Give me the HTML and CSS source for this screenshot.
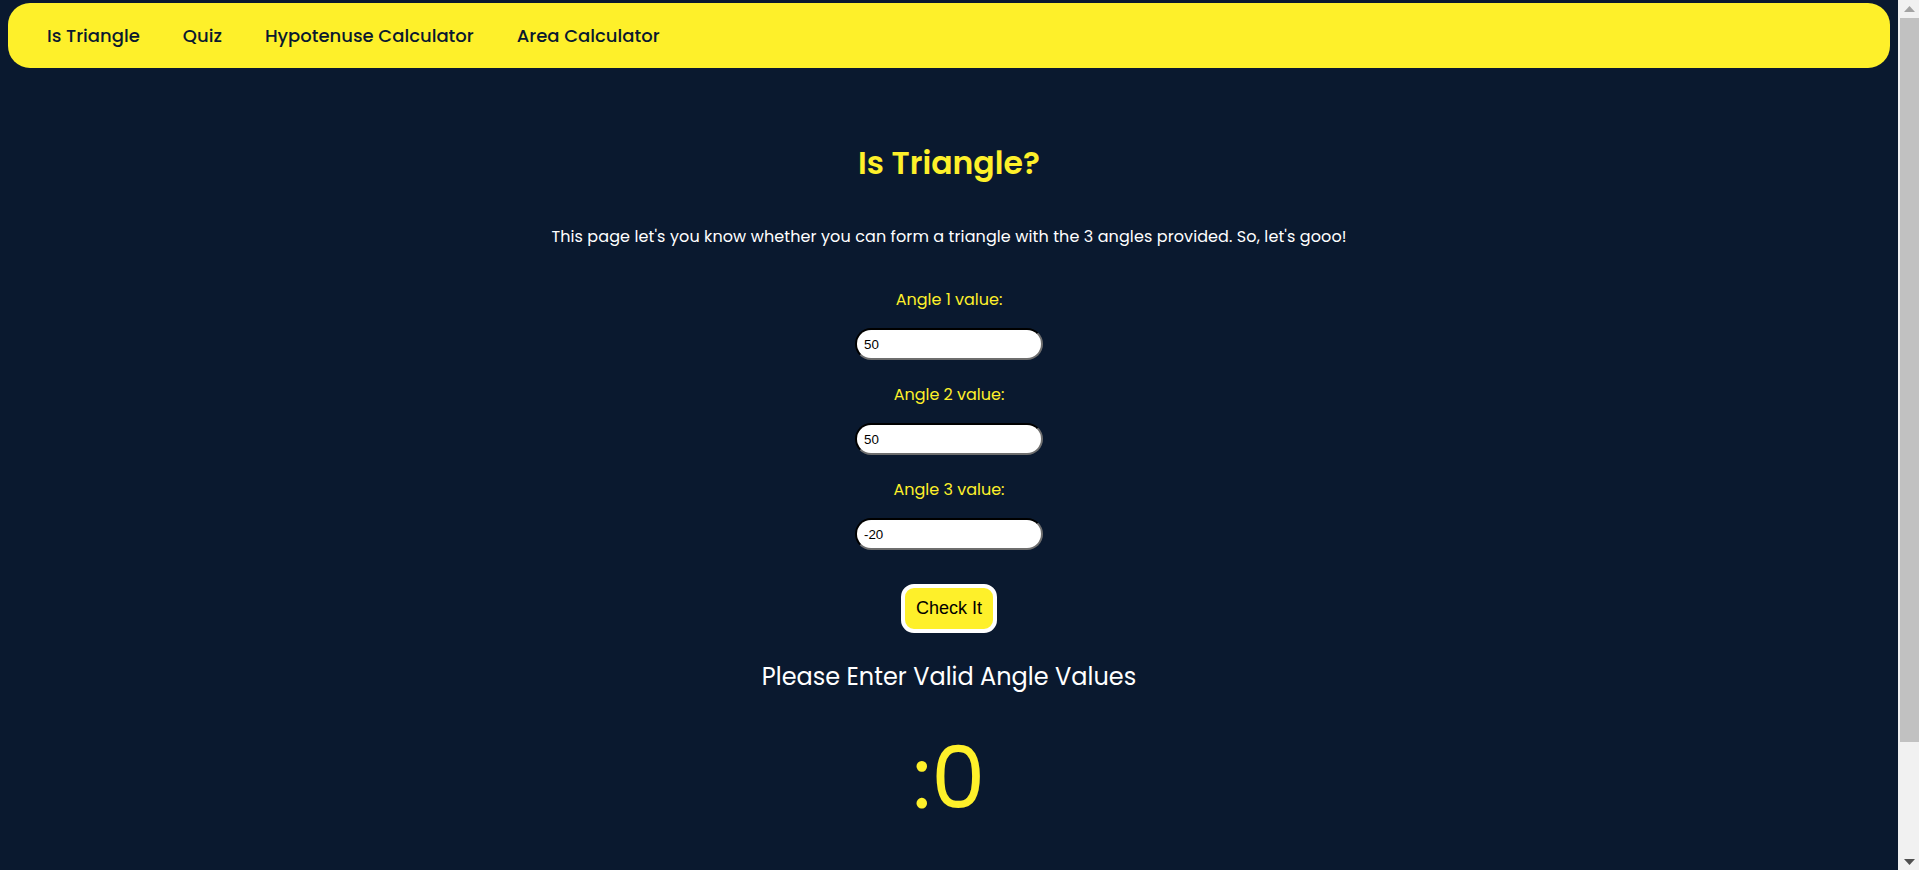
FILE: index.html
```html
<!DOCTYPE html>
<html lang="en">
<head>
<meta charset="utf-8">
<title>Is Triangle?</title>
<link rel="stylesheet" href="styles.css">
</head>
<body>
<div class="page">
  <nav class="navbar">
    <ul class="nav-list">
      <li><a class="nav-link" href="#">Is Triangle</a></li>
      <li><a class="nav-link" href="#">Quiz</a></li>
      <li><a class="nav-link" href="#">Hypotenuse Calculator</a></li>
      <li><a class="nav-link" href="#">Area Calculator</a></li>
    </ul>
  </nav>
  <main class="container">
    <h1 class="title">Is Triangle?</h1>
    <p class="intro">This page let's you know whether you can form a triangle with the 3 angles provided. So, let's gooo!</p>
    <div class="field">
      <label class="field-label" for="a1">Angle 1 value:</label>
      <input class="field-input" id="a1" type="number" value="50">
    </div>
    <div class="field">
      <label class="field-label" for="a2">Angle 2 value:</label>
      <input class="field-input" id="a2" type="number" value="50">
    </div>
    <div class="field">
      <label class="field-label" for="a3">Angle 3 value:</label>
      <input class="field-input" id="a3" type="number" value="-20">
    </div>
    <button class="check-btn" type="button">Check It</button>
    <p class="message">Please Enter Valid Angle Values</p>
    <div class="face">:0</div>
  </main>
</div>
<div class="scrollbar" aria-hidden="true">
  <div class="sb-button">
    <svg width="11" height="6" viewBox="0 0 11 6"><polygon points="0,6 11,6 5.5,0" fill="#a3a3a3"/></svg>
  </div>
  <div class="sb-track"><div class="sb-thumb"></div></div>
  <div class="sb-button">
    <svg width="11" height="6" viewBox="0 0 11 6"><polygon points="0,0 11,0 5.5,6" fill="#505050"/></svg>
  </div>
</div>
</body>
</html>
```

FILE: styles.css
```css
html, body {
  background: #0a192f;
}
body {
  margin: 0;
  font-family: "Poppins", "Inter", "Noto Sans", sans-serif;
}
.page {
  margin-right: 21px;
}
.navbar {
  margin: 3px 8px 0;
  height: 65px;
  background: #fef02a;
  border-radius: 22px;
  display: flex;
  align-items: center;
  padding-left: 39px;
}
.nav-list {
  list-style: none;
  margin: 0;
  padding: 0;
  display: flex;
  gap: 43px;
}
.nav-link {
  color: #0a192f;
  text-decoration: none;
  font-size: 18px;
  font-weight: 500;
}
.container {
  display: flex;
  flex-direction: column;
  align-items: center;
  padding-bottom: 170px;
}
.title {
  margin: 75px 0 0;
  font-size: 31.5px;
  line-height: 40px;
  font-weight: 600;
  color: #fef02a;
}
.intro {
  margin: 42px 0 0;
  font-size: 16px;
  line-height: 24px;
  letter-spacing: 0.1px;
  color: #ffffff;
}
.field {
  display: flex;
  flex-direction: column;
  align-items: center;
  margin-top: 39px;
}
.field + .field {
  margin-top: 23px;
}
.field-label {
  font-size: 16px;
  line-height: 24px;
  color: #fef02a;
  font-weight: 400;
}
.field-input {
  margin-top: 16px;
  box-sizing: border-box;
  width: 188px;
  height: 32px;
  border: 2px inset #767676;
  border-top-color: #3a3a3a;
  border-left-color: #3a3a3a;
  border-right-color: #6e6e6e;
  border-bottom-color: #6e6e6e;
  border-radius: 16px;
  background: #ffffff;
  padding: 0 7px;
  font-family: "Liberation Sans", Arial, sans-serif;
  font-size: 13.33px;
  color: #000000;
  -moz-appearance: textfield;
}
.field-input::-webkit-outer-spin-button,
.field-input::-webkit-inner-spin-button {
  -webkit-appearance: none;
  margin: 0;
}
.check-btn {
  margin-top: 34px;
  box-sizing: border-box;
  height: 49px;
  padding: 0 11px;
  background: #fef02a;
  border: 4px solid #ffffff;
  border-radius: 13px;
  font-family: "Liberation Sans", Arial, sans-serif;
  font-size: 18px;
  color: #000000;
}
.message {
  margin: 26px 0 0;
  font-size: 24px;
  line-height: 36px;
  color: #ffffff;
}
.face {
  margin-top: 33px;
  font-size: 86px;
  line-height: 100px;
  color: #fef02a;
}
.scrollbar {
  position: fixed;
  top: 0;
  right: 0;
  width: 21px;
  height: 100vh;
  background: #f1f1f1;
  display: flex;
  flex-direction: column;
}
.sb-button {
  height: 17px;
  display: flex;
  align-items: center;
  justify-content: center;
  padding-left: 2px;
}
.sb-track {
  flex: 1;
  padding-left: 2px;
}
.sb-thumb {
  margin-top: 1px;
  height: 724px;
  background: #c1c1c1;
}
```
